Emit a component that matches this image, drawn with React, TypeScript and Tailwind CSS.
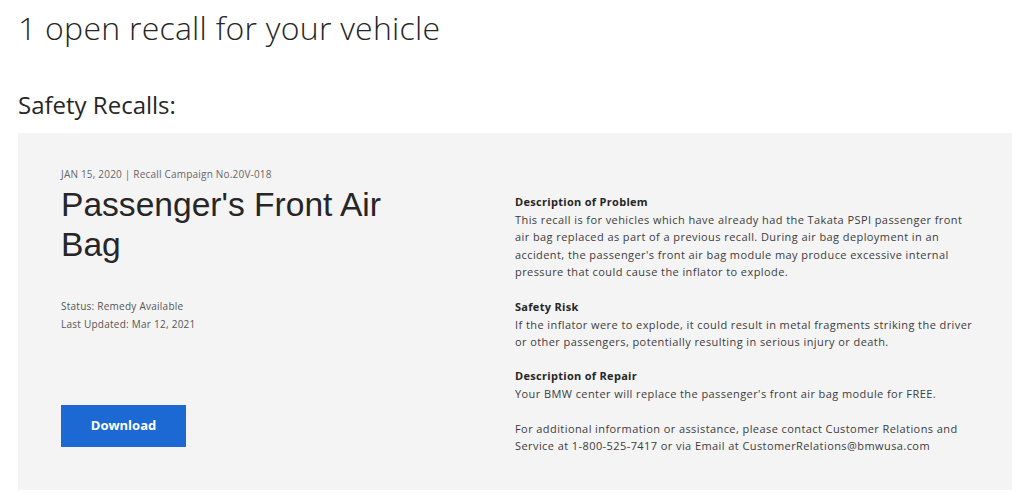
import React from 'react';

const sans = "font-['Open_Sans','Liberation_Sans',sans-serif]";

const Section: React.FC<{ title: string; children: React.ReactNode }> = ({ title, children }) => (
  <div className="mb-[17px]">
    <h4 className="text-[11px] font-bold leading-[18px] tracking-[0.3px] text-[#262626]">{title}</h4>
    {children}
  </div>
);

const App: React.FC = () => {
  return (
    <div className={`min-h-[502px] bg-white px-[18px] pt-[8px] text-[#262626] ${sans}`}>
      <h1 className="text-[32px] font-light leading-[40px] tracking-[0.25px] text-[#262626]">
        1 open recall for your vehicle
      </h1>

      <h2 className="mt-[42px] text-[24px] font-normal leading-[30px]">Safety Recalls:</h2>

      <div className="mt-[13px] grid h-[357px] w-[994px] grid-cols-[454px_1fr] bg-[#f4f4f4] pl-[43px] pt-[34px]">
        {/* left column */}
        <div className="flex flex-col">
          <p className="text-[10px] leading-[14px] tracking-[0.2px] text-[#666]">
            JAN 15, 2020 | Recall Campaign No.20V-018
          </p>
          <h3 className="mt-[4px] font-['Liberation_Sans',Arial,sans-serif] text-[33.6px] leading-[40px] text-[#262626]">
            Passenger's Front Air
            <br />
            Bag
          </h3>
          <div className="mt-[32px] text-[10px] leading-[18px] tracking-[0.25px] text-[#555]">
            <p>Status: Remedy Available</p>
            <p>Last Updated: Mar 12, 2021</p>
          </div>
          <button className="mt-[72px] h-[42px] w-[125px] bg-[#1c69d4] text-[13px] font-bold text-white">
            Download
          </button>
        </div>

        {/* right column */}
        <div className="w-[480px] pt-[26px] text-[11px] leading-[17.4px] tracking-[0.42px] text-[#3c3c3c]">
          <Section title="Description of Problem">
            <p>
              This recall is for vehicles which have already had the Takata PSPI passenger front
              <br />
              air bag replaced as part of a previous recall. During air bag deployment in an
              <br />
              accident, the passenger's front air bag module may produce excessive internal
              <br />
              pressure that could cause the inflator to explode.
            </p>
          </Section>
          <Section title="Safety Risk">
            <p>
              If the inflator were to explode, it could result in metal fragments striking the driver
              <br />
              or other passengers, potentially resulting in serious injury or death.
            </p>
          </Section>
          <Section title="Description of Repair">
            <p>Your BMW center will replace the passenger's front air bag module for FREE.</p>
          </Section>
          <p>
            For additional information or assistance, please contact Customer Relations and
            <br />
            Service at 1-800-525-7417 or via Email at CustomerRelations@bmwusa.com
          </p>
        </div>
      </div>
    </div>
  );
};

export default App;
